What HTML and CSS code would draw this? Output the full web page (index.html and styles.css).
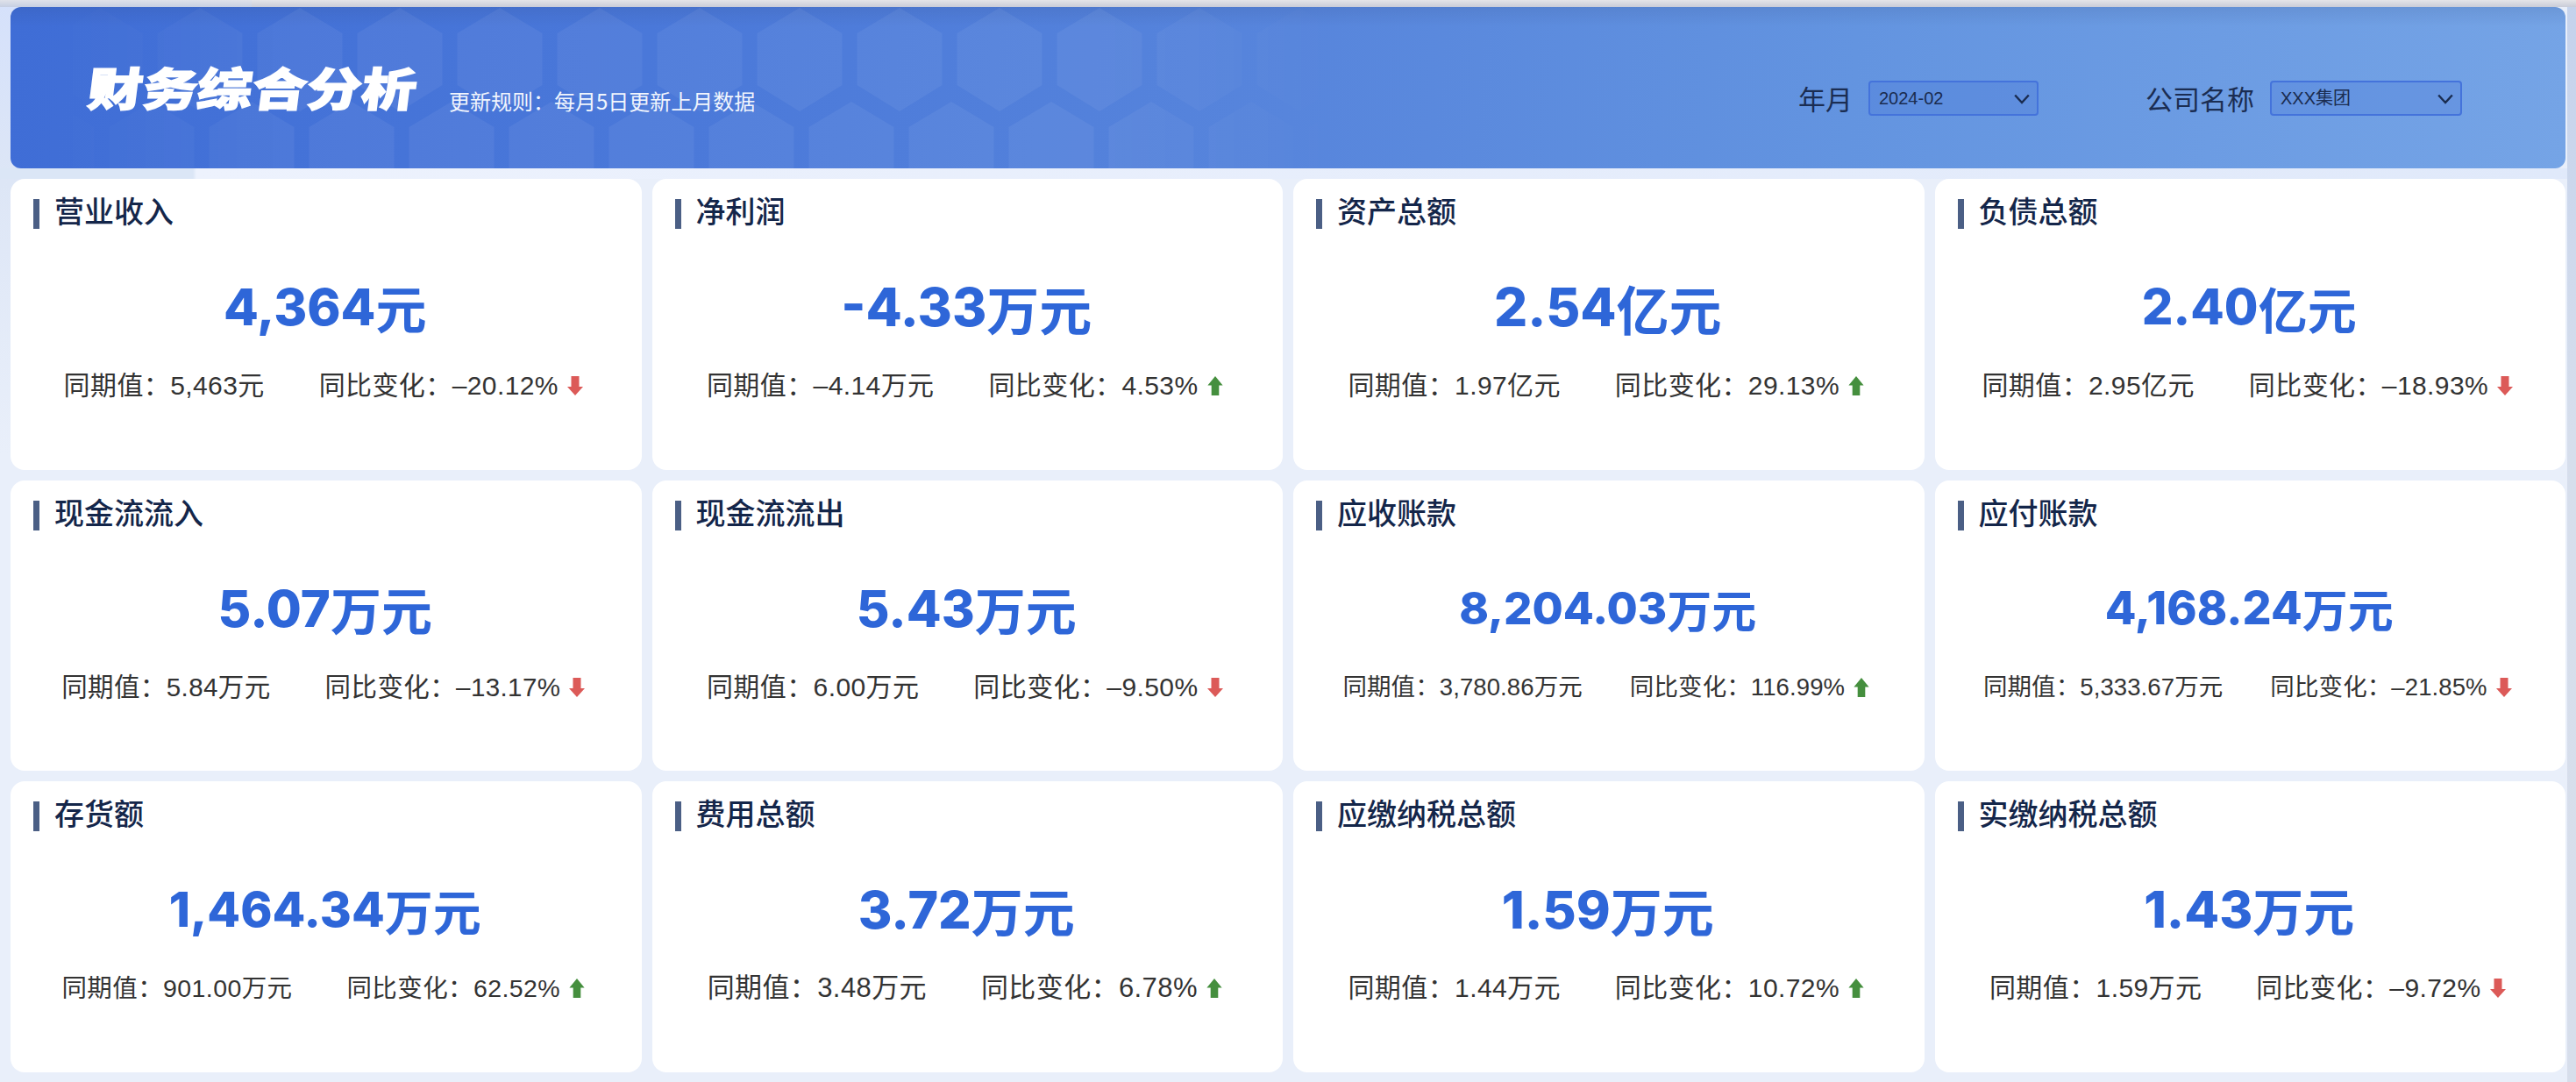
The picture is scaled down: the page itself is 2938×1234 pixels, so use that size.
FILE: index.html
```html
<!DOCTYPE html>
<html lang="zh-CN">
<head>
<meta charset="utf-8">
<title>财务综合分析</title>
<link rel="stylesheet" href="styles.css">
</head>
<body>
<svg class="defs" aria-hidden="true">
  <symbol id="arrow-down" viewBox="0 0 18 22"><polygon points="4.5,0 13.5,0 13.5,12 18,12 9,22 0,12 4.5,12"/></symbol>
  <symbol id="arrow-up" viewBox="0 0 18 23"><polygon points="9,0 18,11 13.5,11 13.5,23 4.5,23 4.5,11 0,11"/></symbol>
  <symbol id="chevron" viewBox="0 0 18 12"><polyline points="1.2,1.5 9,10 16.8,1.5"/></symbol>
</svg>
<main class="page">
  <header class="banner">
    <svg class="hexes" aria-hidden="true">
      <defs>
        <pattern id="hex" x="45" y="0" width="114" height="184" patternUnits="userSpaceOnUse">
          <polygon class="hex" points="57,1 105.500,30 105.500,89 57,119 8.500,89 8.500,30"/>
          <polygon class="hex" points="2,108 50.500,137 50.500,196 2,226 -46.500,196 -46.500,137"/>
          <polygon class="hex" points="116,108 164.500,137 164.500,196 116,226 67.500,196 67.500,137"/>
        </pattern>
      </defs>
      <rect width="100%" height="100%" fill="url(#hex)"/>
    </svg>
    <h1 class="banner-title">财务综合分析</h1>
    <p class="banner-rule">更新规则：每月5日更新上月数据</p>
    <div class="filters">
      <label class="filter">
        <span class="filter-label">年月</span>
        <span class="select-wrap select-wrap--date">
          <select class="select"><option>2024-02</option></select>
          <svg class="chevron"><use href="#chevron"/></svg>
        </span>
      </label>
      <label class="filter">
        <span class="filter-label">公司名称</span>
        <span class="select-wrap select-wrap--company">
          <select class="select"><option>XXX集团</option></select>
          <svg class="chevron"><use href="#chevron"/></svg>
        </span>
      </label>
    </div>
  </header>

  <section class="grid">
    <article class="card">
      <h2 class="card-title">营业收入</h2>
      <div class="value value--58">4,364<span class="unit">元</span></div>
      <div class="meta"><span>同期值：5,463元</span><span class="change">同比变化：–20.12%<svg class="arrow arrow--down"><use href="#arrow-down"/></svg></span></div>
    </article>
    <article class="card">
      <h2 class="card-title">净利润</h2>
      <div class="value value--60">-4.33<span class="unit">万元</span></div>
      <div class="meta"><span>同期值：–4.14万元</span><span class="change">同比变化：4.53%<svg class="arrow arrow--up"><use href="#arrow-up"/></svg></span></div>
    </article>
    <article class="card">
      <h2 class="card-title">资产总额</h2>
      <div class="value value--60">2.54<span class="unit">亿元</span></div>
      <div class="meta"><span>同期值：1.97亿元</span><span class="change">同比变化：29.13%<svg class="arrow arrow--up"><use href="#arrow-up"/></svg></span></div>
    </article>
    <article class="card">
      <h2 class="card-title">负债总额</h2>
      <div class="value value--56">2.40<span class="unit">亿元</span></div>
      <div class="meta"><span>同期值：2.95亿元</span><span class="change">同比变化：–18.93%<svg class="arrow arrow--down"><use href="#arrow-down"/></svg></span></div>
    </article>

    <article class="card">
      <h2 class="card-title">现金流流入</h2>
      <div class="value value--58">5.07<span class="unit">万元</span></div>
      <div class="meta meta--295"><span>同期值：5.84万元</span><span class="change">同比变化：–13.17%<svg class="arrow arrow--down"><use href="#arrow-down"/></svg></span></div>
    </article>
    <article class="card">
      <h2 class="card-title">现金流流出</h2>
      <div class="value value--58">5.43<span class="unit">万元</span></div>
      <div class="meta"><span>同期值：6.00万元</span><span class="change">同比变化：–9.50%<svg class="arrow arrow--down"><use href="#arrow-down"/></svg></span></div>
    </article>
    <article class="card">
      <h2 class="card-title">应收账款</h2>
      <div class="value value--51">8,204.03<span class="unit">万元</span></div>
      <div class="meta meta--small"><span>同期值：3,780.86万元</span><span class="change">同比变化：116.99%<svg class="arrow arrow--up"><use href="#arrow-up"/></svg></span></div>
    </article>
    <article class="card">
      <h2 class="card-title">应付账款</h2>
      <div class="value value--52">4,168.24<span class="unit">万元</span></div>
      <div class="meta meta--small"><span>同期值：5,333.67万元</span><span class="change">同比变化：–21.85%<svg class="arrow arrow--down"><use href="#arrow-down"/></svg></span></div>
    </article>

    <article class="card">
      <h2 class="card-title">存货额</h2>
      <div class="value value--55">1,464.34<span class="unit">万元</span></div>
      <div class="meta meta--285"><span>同期值：901.00万元</span><span class="change">同比变化：62.52%<svg class="arrow arrow--up"><use href="#arrow-up"/></svg></span></div>
    </article>
    <article class="card">
      <h2 class="card-title">费用总额</h2>
      <div class="value value--59">3.72<span class="unit">万元</span></div>
      <div class="meta meta--310"><span>同期值：3.48万元</span><span class="change">同比变化：6.78%<svg class="arrow arrow--up"><use href="#arrow-up"/></svg></span></div>
    </article>
    <article class="card">
      <h2 class="card-title">应缴纳税总额</h2>
      <div class="value value--59">1.59<span class="unit">万元</span></div>
      <div class="meta"><span>同期值：1.44万元</span><span class="change">同比变化：10.72%<svg class="arrow arrow--up"><use href="#arrow-up"/></svg></span></div>
    </article>
    <article class="card">
      <h2 class="card-title">实缴纳税总额</h2>
      <div class="value value--58">1.43<span class="unit">万元</span></div>
      <div class="meta"><span>同期值：1.59万元</span><span class="change">同比变化：–9.72%<svg class="arrow arrow--down"><use href="#arrow-down"/></svg></span></div>
    </article>
  </section>
</main>
</body>
</html>
```

FILE: styles.css
```css
* { box-sizing: border-box; }

html, body { height: 100%; }

body {
  margin: 0;
  overflow: hidden;
  font-family: "Liberation Sans", "Noto Sans CJK SC", sans-serif;
  color: #333;
  background:
    linear-gradient(#e4e4e8, #c9ccd8) 287px 0 / 100% 8px no-repeat,
    linear-gradient(#dfe2ea, #c6cfe2) 0 0 / 287px 8px no-repeat,
    linear-gradient(#c4d2ec, #d6deec 40%, #d7deeb) right top / 10px 100% no-repeat,
    linear-gradient(to right, #dbe6f6 0, #dbe6f6 220px, #edf2fd 224px, #e0e9fa 100%) 0 192px / 100% 12px no-repeat,
    linear-gradient(#d5e1fb, #dde6f6 40%, #e9effa) 0 0 / 220px 520px no-repeat,
    #e9effa;
}

.defs { position: absolute; width: 0; height: 0; }

.page {
  height: 100%;
  padding: 8px 12px 11px;
  display: flex;
  flex-direction: column;
  gap: 12px;
}

.banner {
  position: relative;
  flex: none;
  height: 184px;
  padding: 0 118px 0 89px;
  display: flex;
  align-items: center;
  overflow: hidden;
  border-radius: 12px;
  background:
    linear-gradient(rgba(40, 60, 110, .12), rgba(40, 60, 110, 0) 22px),
    linear-gradient(95deg, #3f6dd6 0%, #4a78d9 25%, #5785dc 50%, #6394e0 72%, #75a4e6 100%);
}

.hexes {
  position: absolute;
  left: 0;
  top: 0;
  width: 100%;
  height: 100%;
  -webkit-mask-image: linear-gradient(to right, transparent 40px, #000 330px, #000 1250px, transparent 1520px);
  mask-image: linear-gradient(to right, transparent 40px, #000 330px, #000 1250px, transparent 1520px);
}

.hex {
  fill: rgba(255, 255, 255, .055);
}

.banner-title {
  position: relative;
  flex: none;
  width: 312px;
  margin: -2px 0 0;
  font-family: "Noto Sans CJK SC", sans-serif;
  font-size: 52px;
  line-height: 60px;
  font-weight: 900;
  color: #fff;
  white-space: nowrap;
  -webkit-text-stroke: 1.5px #fff;
  transform: scaleX(1.2) skewX(-6deg);
  transform-origin: left center;
}

.banner-rule {
  position: relative;
  margin: 30px 0 0 99px;
  font-family: "Noto Sans CJK SC", sans-serif;
  font-size: 24px;
  line-height: 30px;
  color: #f1f5fd;
  white-space: nowrap;
}

.filters {
  position: relative;
  margin: 24px 0 0 auto;
  display: flex;
  align-items: center;
  gap: 122px;
}

.filter {
  display: flex;
  align-items: center;
  gap: 18px;
}

.filter-label {
  font-family: "Noto Sans CJK SC", sans-serif;
  font-size: 31px;
  line-height: 40px;
  color: #1b2d52;
  white-space: nowrap;
}

.select-wrap {
  position: relative;
  display: block;
  height: 40px;
}

.select-wrap--date { width: 194px; }
.select-wrap--company { width: 219px; }

.select {
  display: block;
  width: 100%;
  height: 100%;
  padding: 0 10px;
  appearance: none;
  border: 2px solid #4473db;
  border-radius: 4px;
  background: rgba(62, 110, 214, .22);
  font-family: "Liberation Sans", "Noto Sans CJK SC", sans-serif;
  font-size: 20px;
  color: #1a2c50;
}

.chevron {
  position: absolute;
  right: 10px;
  top: 15px;
  width: 18px;
  height: 12px;
  pointer-events: none;
  fill: none;
  stroke: #1a2c50;
  stroke-width: 2.4;
}

.grid {
  flex: 1;
  min-height: 0;
  display: grid;
  grid-template-columns: repeat(4, 1fr);
  grid-template-rows: repeat(3, 1fr);
  gap: 12px;
}

.card {
  display: flex;
  flex-direction: column;
  padding: 23px 26px 0;
  border-radius: 16px;
  background: #fff;
}

.card-title {
  margin: 0;
  padding-left: 17px;
  height: 34px;
  border-left: 7px solid #4b5f85;
  font-family: "Noto Sans CJK SC", sans-serif;
  font-size: 34px;
  line-height: 25px;
  font-weight: 500;
  color: #14264a;
  white-space: nowrap;
}

.value {
  height: 100px;
  margin-top: 39px;
  margin-left: -2px;
  display: flex;
  align-items: center;
  justify-content: center;
  font-family: Inter, "Noto Sans CJK SC", sans-serif;
  font-weight: 800;
  color: #2e66d8;
  white-space: nowrap;
}

.value--60 { font-size: 60px; }
.value--59 { font-size: 59px; }
.value--58 { font-size: 58px; }
.value--56 { font-size: 56px; }
.value--55 { font-size: 55px; }
.value--52 { font-size: 52px; }
.value--51 { font-size: 51px; }

.unit {
  font-family: "Noto Sans CJK SC", sans-serif;
  font-weight: 700;
}

.meta {
  margin-top: 20px;
  margin-left: -6px;
  display: flex;
  align-items: center;
  justify-content: center;
  gap: 62px;
  font-size: 30px;
  letter-spacing: .4px;
  line-height: 40px;
  color: #333;
  white-space: nowrap;
}

.meta--310 { font-size: 31px; }
.meta--295 { font-size: 29.500px; }
.meta--285 { font-size: 28.500px; }

.meta--small {
  gap: 54px;
  font-size: 27.500px;
  letter-spacing: .1px;
}

.change {
  display: flex;
  align-items: center;
}

.arrow {
  flex: none;
  width: 18px;
  height: 22px;
  margin-left: 10px;
}

.arrow--down { fill: #dc5a58; }
.arrow--up { fill: #458f3e; }
```
